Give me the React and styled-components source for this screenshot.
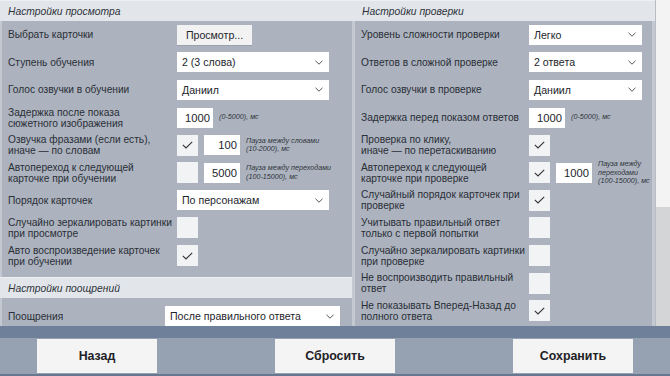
import React from 'react';
import styled, { createGlobalStyle } from 'styled-components';

const GlobalStyle = createGlobalStyle`
    html, body {
        margin: 0;
        padding: 0;
        width: 670px;
        height: 376px;
        overflow: hidden;
        background: #acb3bf;
        font-family: "Liberation Sans", Arial, sans-serif;
    }
`;

const Screen = styled.div`
    width: 670px;
    height: 376px;
    display: flex;
    flex-direction: column;
`;

const Main = styled.div`
    height: 326px;
    display: flex;
    overflow: hidden;
`;

const Column = styled.div`
    width: ${p => p.width}px;
    display: flex;
    flex-direction: column;
`;

const Header = styled.div`
    height: 21px;
    flex: none;
    display: flex;
    align-items: center;
    padding-left: ${p => p.indent}px;
    background: #e2e6eb;
    border-top: 1px solid #eef0f3;
    box-sizing: border-box;
    font-style: italic;
    font-size: 10.3px;
    color: #2e333a;
`;

const Body = styled.div`
    background: #acb3bf;
    border-left: ${p => p.edge}px solid #c4c9d1;
    border-right: ${p => p.rightEdge || 0}px solid #c4c9d1;
    padding: ${p => p.top || 0}px 6px 0 6px;
    flex: ${p => (p.grow ? 1 : 'none')};
`;

const Row = styled.div`
    height: 27.6px;
    display: grid;
    grid-template-columns: ${p => p.label}px 1fr;
    align-items: center;
`;

const Label = styled.div`
    font-size: 10.2px;
    line-height: 11px;
    white-space: nowrap;
    color: #2a2e35;
`;

const Controls = styled.div`
    display: flex;
    align-items: center;
    gap: 6px;
`;

const Select = styled.div`
    width: ${p => p.width}px;
    height: 20px;
    background: #ffffff;
    display: flex;
    align-items: center;
    justify-content: space-between;
    padding: 0 6px 0 5px;
    box-sizing: border-box;
    font-size: 10.6px;
    color: #23262b;
`;

const Chevron = () => (
    <svg width="8" height="5" viewBox="0 0 8 5">
        <polyline points="0.5,0.8 4,4.2 7.5,0.8" fill="none" stroke="#555" strokeWidth="1" />
    </svg>
);

const Button = styled.div`
    width: 75px;
    height: 20px;
    background: #f2f2f2;
    display: flex;
    align-items: center;
    justify-content: center;
    font-size: 10.6px;
    color: #23262b;
    box-shadow: 0 1px 0 #9aa1ac;
`;

const Input = styled.div`
    width: 36px;
    height: 20px;
    flex: none;
    background: #ffffff;
    display: flex;
    align-items: center;
    justify-content: flex-end;
    padding-right: 3px;
    box-sizing: border-box;
    font-size: 11.2px;
    color: #23262b;
`;

const Box = styled.div`
    width: 21px;
    height: 21px;
    flex: none;
    background: #f2f3f5;
    display: flex;
    align-items: center;
    justify-content: center;
`;

const Hint = styled.div`
    font-style: italic;
    font-size: 7.2px;
    line-height: 8.3px;
    white-space: nowrap;
    color: #2f333a;
`;

const Check = ({ on }) => (
    <Box>
        {on && (
            <svg width="11" height="8" viewBox="0 0 11 8">
                <polyline points="0.8,3.8 4,7 10.2,0.8" fill="none" stroke="#333" strokeWidth="1.1" />
            </svg>
        )}
    </Box>
);

const Gap = styled.div`
    height: ${p => p.h}px;
    flex: none;
`;

const Scrollbar = styled.div`
    width: 15px;
    background: #d4d5d7;
    border-left: 1px solid #b9bcc1;
    box-sizing: border-box;
`;

const Thumb = styled.div`
    height: 207px;
    background: #f3f3f3;
`;

const Band = styled.div`
    height: 12px;
    background: #6f809b;
`;

const Bar = styled.div`
    height: 38px;
    display: flex;
    gap: 118px;
    padding: 1px 37px 0;
    box-sizing: border-box;
    background: #96a1b2;
    border-bottom: 2px solid #67778f;
`;

const BigButton = styled.div`
    width: 120px;
    height: 34px;
    background: #f4f4f4;
    display: flex;
    align-items: center;
    justify-content: center;
    font-size: 12.4px;
    font-weight: bold;
    color: #1f2226;
`;

const Delay = ({ value, hint }) => (
    <>
        <Input>{value}</Input>
        <Hint>{hint}</Hint>
    </>
);

export default function App() {
    return (
        <Screen>
            <GlobalStyle />
            <Main>
                <Column width={352}>
                    <Header indent={8}>Настройки просмотра</Header>
                    <Body edge={2}>
                        <Row label={169}>
                            <Label>Выбрать карточки</Label>
                            <Controls><Button>Просмотр...</Button></Controls>
                        </Row>
                        <Row label={169}>
                            <Label>Ступень обучения</Label>
                            <Controls><Select width={152}>2 (3 слова)<Chevron /></Select></Controls>
                        </Row>
                        <Row label={169}>
                            <Label>Голос озвучки в обучении</Label>
                            <Controls><Select width={152}>Даниил<Chevron /></Select></Controls>
                        </Row>
                        <Row label={169}>
                            <Label>Задержка после показа<br />сюжетного изображения</Label>
                            <Controls><Delay value="1000" hint="(0-5000), мс" /></Controls>
                        </Row>
                        <Row label={169}>
                            <Label>Озвучка фразами (если есть),<br />иначе — по словам</Label>
                            <Controls>
                                <Check on />
                                <Delay value="100" hint={<>Пауза между словами<br />(10-2000), мс</>} />
                            </Controls>
                        </Row>
                        <Row label={169}>
                            <Label>Автопереход к следующей<br />карточке при обучении</Label>
                            <Controls>
                                <Check />
                                <Delay value="5000" hint={<>Пауза между переходами<br />(100-15000), мс</>} />
                            </Controls>
                        </Row>
                        <Row label={169}>
                            <Label>Порядок карточек</Label>
                            <Controls><Select width={152}>По персонажам<Chevron /></Select></Controls>
                        </Row>
                        <Row label={169}>
                            <Label>Случайно зеркалировать картинки<br />при просмотре</Label>
                            <Controls><Check /></Controls>
                        </Row>
                        <Row label={169}>
                            <Label>Авто воспроизведение карточек<br />при обучении</Label>
                            <Controls><Check on /></Controls>
                        </Row>
                        <Gap h={8} />
                    </Body>
                    <Header indent={8}>Настройки поощрений</Header>
                    <Body edge={2} top={4} grow>
                        <Row label={157}>
                            <Label>Поощрения</Label>
                            <Controls><Select width={175}>После правильного ответа<Chevron /></Select></Controls>
                        </Row>
                    </Body>
                </Column>
                <Column width={303}>
                    <Header indent={10}>Настройки проверки</Header>
                    <Body edge={3} rightEdge={3} grow>
                        <Row label={168}>
                            <Label>Уровень сложности проверки</Label>
                            <Controls><Select width={113}>Легко<Chevron /></Select></Controls>
                        </Row>
                        <Row label={168}>
                            <Label>Ответов в сложной проверке</Label>
                            <Controls><Select width={113}>2 ответа<Chevron /></Select></Controls>
                        </Row>
                        <Row label={168}>
                            <Label>Голос озвучки в проверке</Label>
                            <Controls><Select width={113}>Даниил<Chevron /></Select></Controls>
                        </Row>
                        <Row label={168}>
                            <Label>Задержка перед показом ответов</Label>
                            <Controls><Delay value="1000" hint="(0-5000), мс" /></Controls>
                        </Row>
                        <Row label={168}>
                            <Label>Проверка по клику,<br />иначе — по перетаскиванию</Label>
                            <Controls><Check on /></Controls>
                        </Row>
                        <Row label={168}>
                            <Label>Автопереход к следующей<br />карточке при проверке</Label>
                            <Controls>
                                <Check on />
                                <Delay value="1000" hint={<>Пауза между<br />переходами<br />(100-15000), мс</>} />
                            </Controls>
                        </Row>
                        <Row label={168}>
                            <Label>Случайный порядок карточек при<br />проверке</Label>
                            <Controls><Check on /></Controls>
                        </Row>
                        <Row label={168}>
                            <Label>Учитывать правильный ответ<br />только с первой попытки</Label>
                            <Controls><Check /></Controls>
                        </Row>
                        <Row label={168}>
                            <Label>Случайно зеркалировать картинки<br />при проверке</Label>
                            <Controls><Check /></Controls>
                        </Row>
                        <Row label={168}>
                            <Label>Не воспроизводить правильный<br />ответ</Label>
                            <Controls><Check /></Controls>
                        </Row>
                        <Row label={168}>
                            <Label>Не показывать Вперед-Назад до<br />полного ответа</Label>
                            <Controls><Check on /></Controls>
                        </Row>
                    </Body>
                </Column>
                <Scrollbar><Thumb /></Scrollbar>
            </Main>
            <Band />
            <Bar>
                <BigButton>Назад</BigButton>
                <BigButton>Сбросить</BigButton>
                <BigButton>Сохранить</BigButton>
            </Bar>
        </Screen>
    );
}
